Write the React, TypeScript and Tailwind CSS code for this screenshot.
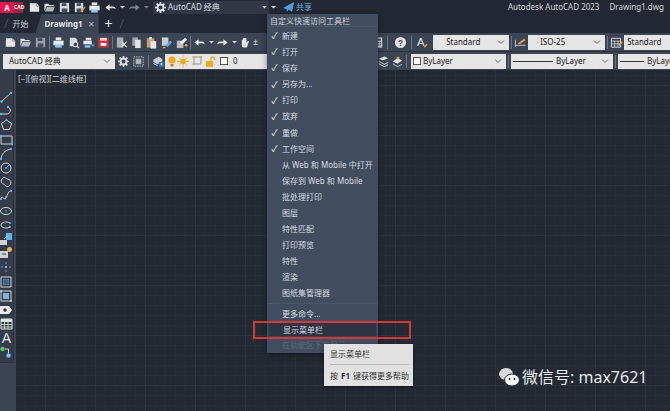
import React from "react";

const font = { fontFamily: '"Noto Sans","Noto Sans CJK SC",sans-serif' };

type P = { c?: string };
const S = ({ children, w = 13 }: { children: React.ReactNode; w?: number }) => (
  <svg width={w} height={13} viewBox="0 0 14 14" className="shrink-0">
    {children}
  </svg>
);
const IFile = ({ c = "#e4e6ea" }: P) => <S><path d="M2 2.500h7l3 3v6H2z" fill={c} /><path d="M9 2.500v3h3" fill="none" stroke="#6b7480" strokeWidth=".8" /></S>;
const IFolder = ({ c = "#dfe2e6" }: P) => <S><path d="M1.500 3h4l1 1.200h5v1.300H4L1.500 11z" fill={c} /><path d="M4.200 6.300h8.600l-2 5H2z" fill={c} opacity=".75" /></S>;
const ISave = ({ c = "#d5d8dd" }: P) => <S><path d="M2 2h10v10H2z" fill={c} /><path d="M4 2.500h5v3H4zM4 8h6v4H4z" fill="#414a59" /></S>;
const ISaveAs = () => <S><path d="M2 2h9v10H2z" fill="#d5d8dd" /><path d="M4 2.500h4.500v3H4zM4 8h5v4H4z" fill="#414a59" /><path d="M8 11l4.500-5 1 1-4.500 5z" fill="#e6a33c" /></S>;
const IPrint = ({ c = "#e8eaee" }: P) => <S><path d="M4 1.500h6v3H4z" fill={c} /><path d="M1.500 5h11v5h-11z" fill={c} /><path d="M3.500 9h7v3.500h-7z" fill="#8ec8ee" /></S>;
const IPreview = () => <S><path d="M3 2h6l2 2v7H3z" fill="#d9dce0" /><circle cx="9" cy="9" r="2.600" fill="#414a59" stroke="#e8eaee" strokeWidth="1.100" /><path d="M11 11l2 2" stroke="#e8eaee" strokeWidth="1.300" /></S>;
const IPlot = () => <S><path d="M4 2h6v2.500H4zM1.500 5h9v4h-9z" fill="#e8eaee" /><path d="M3 10h6v2.500H3z" fill="#8ec8ee" /><path d="M9 9h5l-2 2.500z" fill="#5aa9e6" /></S>;
const IPdf = () => <S><path d="M1.500 2h11v10.500h-11z" fill="#d2323c" /><path d="M3.500 2h7v3h-7z" fill="#f1d6d8" /><path d="M4 7.500h6v3h-6z" fill="#fff" /></S>;
const ICut = () => <S><path d="M2 1.500h7v11H2z" fill="#a9aeb6" /><path d="M7 6l5.500 6M12.500 6L7 12" stroke="#f1f2f4" strokeWidth="1.200" /></S>;
const ICopy = () => <S><path d="M2.500 1.500h6v9h-6z" fill="#9ea4ad" /><path d="M5.500 4h6v9h-6z" fill="#e4e6ea" /></S>;
const IPaste = () => <S><path d="M2 2.500h8v10H2z" fill="#c9a06a" /><path d="M4.500 1h3v2.500h-3z" fill="#e8eaee" /><path d="M6 5.500h6v8H6z" fill="#e8eaee" /></S>;
const IMatch = () => <S><path d="M2 1.500h7v9H2z" fill="#c9ccd1" /><path d="M6 10l5-5 2 2-5 5z" fill="#5aa9e6" /><path d="M3 12.500h3" stroke="#e6a33c" strokeWidth="1.500" /></S>;
const IMatch2 = () => <S><path d="M2 5h7v8H2z" fill="#b9bdc4" /><path d="M5 7l6-5 2 2-5 5z" fill="#e8eaee" /><circle cx="12" cy="10" r="1.500" fill="#e6a33c" /></S>;
const IUndo = ({ c = "#e4e6ea" }: P) => <S><path d="M1.500 7L6 3.500V6h3.500c2 0 3 1.200 3 3-.8-1-1.800-1.300-3-1.300H6v2.800z" fill={c} /></S>;
const IRedo = ({ c = "#e4e6ea" }: P) => <S><path d="M12.500 7L8 3.500V6H4.500c-2 0-3 1.200-3 3 .8-1 1.800-1.300 3-1.300H8v2.800z" fill={c} /></S>;
const ICaret = ({ c = "#d7dade" }: P) => <svg width="7" height="14" viewBox="0 0 7 14" className="shrink-0"><path d="M1 6h5L3.500 8.500z" fill={c} /></svg>;
const IHand = () => <S><path d="M3 7V4.500c0-1 1.200-1 1.200 0V3c0-1 1.300-1 1.300 0v-.5c0-1 1.300-1 1.300 0V3c0-1 1.200-1 1.200 0v4l1.500-1.500c.8-.5 1.500.3 1 1L8.500 12.500H5C3.500 12.500 3 11 3 9.500z" fill="#e4e6ea" /></S>;
const IGear = ({ c = "#dcdfe3" }: P) => <S><circle cx="7" cy="7" r="3.200" fill="none" stroke={c} strokeWidth="2" /><path d="M7 1v2.500M7 10.500V13M1 7h2.500M10.500 7H13M2.800 2.800l1.700 1.700M9.500 9.500l1.700 1.700M11.200 2.800L9.500 4.500M4.500 9.500l-1.700 1.700" stroke={c} strokeWidth="1.800" /></S>;
const IMax = () => <S><path d="M2 2h10v10H2z" fill="none" stroke="#c9ccd1" strokeWidth="1" strokeDasharray="1.500 1" /><path d="M4 4h6v6H4z" fill="#aeb3ba" /></S>;
const ILayer = () => <S><path d="M1.500 5L7 2l4 2v3l-5 3-4.500-2.500z" fill="#c9ccd1" /><path d="M1.500 9l4.500 2.500" stroke="#e8eaee" /><path d="M7.500 7.500h5.500v5.500H7.500z" fill="#2f6fb0" /><path d="M10.200 8.500v2.500" stroke="#fff" strokeWidth="1.500" /></S>;
const ICalc = () => <S><path d="M3 1.500h8v11H3z" fill="#d5d8dd" /><path d="M4.500 3h5v2h-5zM4.500 6.500h1.300v1.300H4.500zM6.500 6.500h1.300v1.300H6.500zM8.500 6.500h1.300v1.300H8.500zM4.500 9h1.300v1.300H4.500zM6.500 9h1.300v1.300H6.500zM8.500 9h1.300v1.300H8.500z" fill="#414a59" /></S>;
const IHelp = () => <S><circle cx="7" cy="7" r="6" fill="#e4e6ea" /><text x="7" y="10.300" textAnchor="middle" fontSize="9" fontWeight="700" fill="#414a59" fontFamily="Liberation Sans">?</text></S>;
const IStyleA = () => <S><text x="1" y="11" fontSize="12" fill="#e8eaee" fontFamily="Liberation Sans">A</text><path d="M9 12l3-3" stroke="#e6a33c" strokeWidth="1.500" /></S>;
const IDim = () => <S><path d="M1.500 4v8M1.500 10h11" stroke="#c9ccd1" /><path d="M4 8l7-5 1.500 1.500L6 9z" fill="#e6a33c" /></S>;
const ITable = () => <S><path d="M1.500 2.500h10v9.500h-10z" fill="none" stroke="#dfe2e6" /><path d="M1.500 5.500h10M1.500 8.500h10M5 5.500V12M8.500 5.500V12" stroke="#dfe2e6" strokeWidth=".8" /><path d="M9 9l4-3 .8 1-4 4z" fill="#e6a33c" /></S>;
const ILayMatch = () => <S><path d="M2 4l6-2.500 4 2-6 2.500z" fill="#dfe2e6" /><path d="M2 7l6 3 4-2M2 9.500l6 3 4-2" fill="none" stroke="#dfe2e6" /></S>;
const ILayPrev = () => <S><path d="M2 7l5-3.500 5 2.500-5 3.500z" fill="#dfe2e6" /><path d="M2 9.500l5 3 5-2.500" fill="none" stroke="#c9ccd1" /><path d="M6 2l3 0v2.500H6z" fill="#e6a33c" /></S>;
const Sep = ({ l = 3, r = 3 }: { l?: number; r?: number }) => (
  <div className="w-px h-[13px] bg-[#6a7483] shrink-0" style={{ marginLeft: l, marginRight: r }} />
);
const Chevron = () => (
  <svg width="8" height="6" viewBox="0 0 8 6" className="shrink-0"><path d="M1 1.500l3 3 3-3" fill="none" stroke="#6e6e6e" strokeWidth="1" /></svg>
);
const Slot = ({ children, w = 15 }: { children: React.ReactNode; w?: number }) => (
  <div className="flex items-center justify-center shrink-0" style={{ width: w }}>{children}</div>
);
const Drop = ({ w, children }: { w: number; children: React.ReactNode }) => (
  <div className="h-[15px] bg-[#e6e6e6] flex items-center justify-between pr-[4px] shrink-0 text-[#222] text-[8px]" style={{ width: w }}>
    {children}
    <Chevron />
  </div>
);

const items: [string, boolean][] = [
  ["新建", true], ["打开", true], ["保存", true], ["另存为...", true], ["打印", true], ["放弃", true], ["重做", true], ["工作空间", true],
  ["从 Web 和 Mobile 中打开", false], ["保存到 Web 和 Mobile", false], ["批处理打印", false], ["图层", false], ["特性匹配", false],
  ["打印预览", false], ["特性", false], ["渲染", false], ["图纸集管理器", false],
];

const dot = "#5fb4ec";
const Side = ({ children }: { children: React.ReactNode }) => (
  <svg width="13" height="14" viewBox="0 0 13 14" className="shrink-0">{children}</svg>
);
const line = { fill: "none", stroke: "#cfd3d8", strokeWidth: 1 };
const sideIcons = [
  <Side><path d="M1 12L12 2" {...line} /><circle cx="1.500" cy="11.500" r="1.300" fill={dot} /><circle cx="11" cy="3" r="1.300" fill={dot} /></Side>,
  <Side><path d="M0 10h6c5 0 6-5 2-7" {...line} /><circle cx="1" cy="10" r="1.200" fill={dot} /><circle cx="8" cy="3" r="1.200" fill={dot} /></Side>,
  <Side><path d="M6.500 2l5 3.500-2 6h-6l-2-6z" {...line} /><circle cx="6.500" cy="2" r="1" fill={dot} /></Side>,
  <Side><path d="M1 3h11v8H1z" {...line} /><circle cx="1" cy="3" r="1.200" fill={dot} /><circle cx="12" cy="11" r="1.200" fill={dot} /></Side>,
  <Side><path d="M1 13C1 7 5 3 11 2" {...line} /><circle cx="1" cy="12" r="1.100" fill={dot} /><circle cx="11" cy="2" r="1.100" fill={dot} /></Side>,
  <Side><circle cx="6" cy="7" r="5" {...line} /><path d="M6 7l3.500-3.500" stroke={dot} /><circle cx="6" cy="7" r="1" fill={dot} /></Side>,
  <Side><path d="M2 4c2-3 4-1 5 0 3 0 5 3 3 6-2 3-5 1-6-1-2 0-4-2-2-5z" {...line} /></Side>,
  <Side><path d="M0 11c3-7 4 2 6-2s2-7 6-7" {...line} /><circle cx="1" cy="10" r="1" fill={dot} /><circle cx="6" cy="8" r="1" fill={dot} /><circle cx="11" cy="2" r="1" fill={dot} /></Side>,
  <Side><ellipse cx="6" cy="7" rx="5.500" ry="3.500" {...line} /><circle cx="6" cy="7" r=".8" fill={dot} /></Side>,
  <Side><path d="M10 9C7 11 1 10 1 7s6-4 9-2" {...line} /><circle cx="10" cy="5" r="1" fill={dot} /><circle cx="10" cy="9" r="1" fill={dot} /></Side>,
  <Side><path d="M6 1h6v7H6z" fill={dot} /><path d="M0 8h7v5H0z" fill="#cfd3d8" /><path d="M7 4l-3 3" stroke="#fff" /></Side>,
  <Side><path d="M0 5h8v7H0z" fill="#cfd3d8" /><path d="M2 8h4" stroke="#414a59" /><circle cx="9.500" cy="3.500" r="2.500" fill="#e6b33c" /></Side>,
  <Side><circle cx="6" cy="7" r="1" fill="#cfd3d8" /><circle cx="2" cy="7" r=".8" fill={dot} /><circle cx="10" cy="7" r=".8" fill={dot} /><circle cx="6" cy="3" r=".8" fill={dot} /><circle cx="6" cy="11" r=".8" fill={dot} /></Side>,
  <Side><path d="M1 2h10v10H1z" {...line} /><path d="M3 4h6v6H3z" fill="#5e8fc0" /><path d="M3 6h6M3 8h6M5 4v6M7 4v6" stroke="#2d3644" strokeWidth=".6" /></Side>,
  <Side><path d="M1 2h10v10H1z" {...line} /><path d="M3 4h6v6H3z" fill="#7fb2dc" /><circle cx="1" cy="2" r="1" fill="#cfd3d8" /><circle cx="11" cy="12" r="1" fill="#cfd3d8" /></Side>,
  <Side><path d="M0 3h9l3 4-3 4H0z" fill="#e8eaee" /><circle cx="5" cy="7" r="1.800" fill="#343c49" /></Side>,
  <Side><path d="M1 2h11v10H1z" fill="none" stroke="#dfe2e6" /><path d="M1 2h11v3H1z" fill="#dfe2e6" /><path d="M1 7.500h11M1 10h11M4.500 5v7M8 5v7" stroke="#dfe2e6" strokeWidth=".8" /></Side>,
  <span className="text-[#e8eaee] text-[14px] leading-[14px] w-[13px] text-center" style={{ fontFamily: "Liberation Sans" }}>A</span>,
  <Side><circle cx="2.500" cy="4" r="2.300" fill="#4cc76a" /><circle cx="8.500" cy="10.500" r="2.300" fill="#6cc1f5" /><path d="M5 4h3.500v4" fill="none" stroke="#cfd3d8" /></Side>,
];

export default function App() {
  return (
    <div className="relative w-[670px] h-[411px] overflow-hidden flex flex-col bg-[#222933] text-[#d8dce2]" style={font}>
      {/* title bar */}
      <div className="h-[14px] flex items-center bg-[#222833] shrink-0">
        <div className="flex h-[11px] w-[23px] items-stretch shrink-0 text-[5px] font-bold leading-[11px]">
          <div className="w-[14px] bg-[#e5144f] text-white text-[8px] text-center">A</div>
          <div className="w-[9px] bg-[#a81f3f] text-white text-center">CAD</div>
        </div>
        <div className="flex items-center ml-[4px]">
          <Slot><IFile /></Slot><Slot><IFolder /></Slot><Slot><ISave /></Slot><Slot><ISaveAs /></Slot><Slot><IPrint /></Slot>
          <Slot w={17}><IUndo /></Slot><Slot w={6}><ICaret /></Slot>
          <Slot w={18}><IRedo c="#7b828c" /></Slot><Slot w={7}><ICaret c="#7b828c" /></Slot>
        </div>
        <div className="ml-[3px] w-[116px] h-[13px] bg-[#303845] flex items-center pl-[1px] pr-[1px] text-[8px] shrink-0">
          <IGear />
          <span className="ml-[1px] text-[#d7dbe1] whitespace-nowrap">AutoCAD 经典</span>
          <div className="ml-auto"><ICaret /></div>
        </div>
        <Slot w={8}><ICaret /></Slot>
        <div className="ml-[6px]">
          <svg width="11" height="11" viewBox="0 0 11 11"><path d="M0 6L11 0 9 10 5.500 7.500 4 10 3.500 7z" fill="#4aa0e0" /></svg>
        </div>
        <span className="ml-[2px] text-[8px] text-[#6fb0e4]">共享</span>
        <span className="ml-auto text-[8px] whitespace-nowrap text-[#d2d6dc]">Autodesk AutoCAD 2023</span>
        <span className="ml-[10px] mr-[6px] text-[8px] whitespace-nowrap text-[#d2d6dc]">Drawing1.dwg</span>
      </div>

      {/* tabs */}
      <div className="h-[19px] flex items-center bg-[#222833] shrink-0 text-[8px]">
        <span className="ml-[4px] text-[#5a6472] text-[13px] font-light">/</span>
        <span className="ml-[4px] text-[#c6cbd2]">开始</span>
        <div className="ml-[7px] h-[19px] w-[63px] bg-[#3b4453] flex items-center pl-[9px] shrink-0 [clip-path:polygon(6px_0,100%_0,100%_100%,0_100%)]">
          <span className="font-bold text-[#e6e8ec]">Drawing1</span>
          <span className="ml-[5px] text-[#b8bdc5] text-[8px]">✕</span>
        </div>
        <span className="ml-[6px] text-[#e8eaee] text-[14px] leading-none">+</span>
        <span className="ml-[7px] text-[#5a6472] text-[13px] font-light">/</span>
      </div>

      {/* toolbar 1 */}
      <div className="h-[19px] flex items-center bg-[#3b4453] border-b border-[#2d3441] shrink-0 pl-[3px] text-[8px]">
        <Slot><IFile /></Slot><Slot><IFolder /></Slot><Slot><ISave c="#9aa0a9" /></Slot>
        <Sep l={1} r={1} />
        <Slot><IPrint /></Slot><Slot><IPreview /></Slot><Slot><IPlot /></Slot><Slot><IPdf /></Slot>
        <Sep l={1} r={1} />
        <Slot><ICut /></Slot><Slot><ICopy /></Slot><Slot><IPaste /></Slot><Slot><IMatch /></Slot><Slot><IMatch2 /></Slot>
        <Sep l={1} r={1} />
        <Slot><IUndo /></Slot><Slot w={8}><ICaret /></Slot><Slot><IRedo /></Slot><Slot w={8}><ICaret /></Slot>
        <Slot w={15}><IHand /></Slot>
        <span className="text-[#dfe2e6] text-[9px] w-[12px]">±</span>
        <div className="w-[113px] shrink-0" />
        <Slot><ICalc /></Slot>
        <Sep l={1} r={1} />
        <div className="ml-[5px]"><IHelp /></div>
        <Sep l={4} r={3} />
        <Slot w={14}><IStyleA /></Slot>
        <div className="ml-[4px]"><Drop w={76}><span className="ml-[13px]">Standard</span></Drop></div>
        <Sep l={2} r={1} />
        <Slot w={14}><IDim /></Slot>
        <div className="ml-[1px]"><Drop w={77}><span className="ml-[12px]">ISO-25</span></Drop></div>
        <Sep l={2} r={1} />
        <Slot w={14}><ITable /></Slot>
        <div className="ml-[1px]"><Drop w={60}><span className="ml-[3px]">Standard</span></Drop></div>
      </div>

      {/* toolbar 2 */}
      <div className="h-[18px] flex items-center bg-[#3b4453] shrink-0 pl-[3px] text-[8px]">
        <Drop w={112}><span className="ml-[6px]">AutoCAD 经典</span></Drop>
        <Slot w={16}><IGear /></Slot>
        <Slot w={14}><IMax /></Slot>
        <Sep l={3} r={2} />
        <Slot w={14}><ILayer /></Slot>
        <div className="w-[120px] h-[15px] bg-[#e6e6e6] flex items-center pl-[1px] text-[#222] shrink-0">
          <svg width="54" height="13" viewBox="0 0 54 13" className="shrink-0">
            <circle cx="6" cy="5" r="3.600" fill="#f2ab14" /><path d="M4.500 9h3v2.500h-3z" fill="#b8801c" />
            <circle cx="17" cy="6.500" r="2.800" fill="#f2ab14" /><path d="M17 0v13M11 6.500h12M13 2.500l8 8M21 2.500l-8 8" stroke="#f2ab14" strokeWidth=".8" />
            <path d="M28 2h7v7h-7z" fill="none" stroke="#8a97a6" /><path d="M26.500 1h2v2h-2zM34 1h2v2h-2zM26.500 8h2v2h-2z" fill="#e6a33c" />
            <path d="M40 6h7v6h-7z" fill="#f2ab14" /><path d="M45 6V3.500c0-2 3.500-2 3.500 0V5" fill="none" stroke="#f2ab14" strokeWidth="1.300" />
          </svg>
          <div className="w-[8px] h-[8px] bg-white border border-[#555] shrink-0" />
          <span className="ml-[5px]">0</span>
        </div>
        <div className="ml-[92px] flex items-center shrink-0">
          <Slot w={13}><ILayMatch /></Slot><Slot w={14}><ILayPrev /></Slot>
          <Sep l={2} r={4} />
          <Drop w={95}><span className="flex items-center ml-[2px]"><span className="w-[8px] h-[8px] bg-white border border-[#555] mr-[2px]" />ByLayer</span></Drop>
          <Sep l={2} r={2} />
          <Drop w={102}><span className="flex items-center ml-[2px]"><span className="w-[40px] h-px bg-[#333] mr-[3px]" />ByLayer</span></Drop>
          <Sep l={2} r={2} />
          <div className="h-[15px] w-[60px] bg-[#e6e6e6] flex items-center text-[#222] shrink-0 overflow-hidden whitespace-nowrap">
            <span className="w-[24px] h-px bg-[#333] ml-[2px] mr-[3px] shrink-0" />ByLayer
          </div>
        </div>
      </div>

      {/* work area */}
      <div className="flex flex-1 min-h-0">
        <div className="w-[16px] bg-[#3b4453] shrink-0 flex flex-col">
          <div className="w-[14px] bg-[#343c49] border-r border-b border-[#2b323e] pt-[20px] pb-[2px] flex flex-col gap-0">
            {sideIcons.map((ic, i) => (
              <div key={i} className="h-[14.200px] flex items-center justify-center">{ic}</div>
            ))}
          </div>
        </div>
        <div className="flex-1 relative bg-[#222933] bg-[linear-gradient(#2b333e_1px,transparent_1px),linear-gradient(90deg,#2b333e_1px,transparent_1px),linear-gradient(#262d38_1px,transparent_1px),linear-gradient(90deg,#262d38_1px,transparent_1px)] bg-[size:50px_50px,50px_50px,10px_10px,10px_10px] bg-[position:29px_15px,29px_15px,9px_5px,9px_5px]">
          <div className="pl-[2px] pt-[3px] text-[8px] leading-[12px] text-[#cdd1d7]">[−][俯视][二维线框]</div>
          <div className="absolute left-[484px] top-[295px] flex items-center text-[16px] text-[#e9ebee] whitespace-nowrap">
            <svg width="21" height="22" viewBox="0 0 21 22" className="shrink-0 -ml-[1px] mr-[1px]">
              <ellipse cx="7" cy="8" rx="7" ry="6" fill="#d8dadd" />
              <ellipse cx="13" cy="14" rx="7.500" ry="6" fill="#f2f3f4" stroke="#222933" />
              <circle cx="10.500" cy="13" r="1" fill="#222933" /><circle cx="15.500" cy="13" r="1" fill="#222933" />
            </svg>
            <span className="ml-[1px]">微信号: max7621</span>
          </div>
        </div>
      </div>

      {/* dropdown menu */}
      <div className="absolute left-[267px] top-[14px] w-[111px] h-[339px] bg-[#414c5e] shadow-[0_2px_6px_rgba(0,0,0,.45)] text-[8px] text-[#d8dce2] flex flex-col">
        <div className="h-[13px] leading-[13px] pl-[3px] text-[#d2d6dc] border-b border-[#4c5769] whitespace-nowrap">自定义快速访问工具栏</div>
        <div className="h-[1px]" />
        {items.map(([t, ck], i) => (
          <div key={i} className="h-[16.200px] flex items-center whitespace-nowrap">
            <span className="w-[15px] text-center text-[9px] text-[#eef0f3] shrink-0">{ck ? "✓" : ""}</span>
            <span>{t}</span>
          </div>
        ))}
        <div className="h-px bg-[#4c5769] mt-[2px] mb-[2px]" />
        <div className="h-[16px] flex items-center pl-[15px]">更多命令...</div>
        <div className="h-[15px] flex items-center pl-[14px] mx-[1px] bg-[#2e3542] border border-[#3a4352]">显示菜单栏</div>
        <div className="h-[16px] flex items-center pl-[15px] text-[#5f6a7b] whitespace-nowrap">在功能区下方显示</div>
      </div>

      {/* red highlight */}
      <div className="absolute left-[253px] top-[321px] w-[158px] h-[18px] border-2 border-[#d8363a]" />

      {/* tooltip */}
      <div className="absolute left-[324px] top-[344px] w-[89px] h-[42px] bg-[#e1e1e1] shadow-[0_1px_3px_rgba(0,0,0,.5)] text-[8px] text-[#333] flex flex-col pl-[6px] pr-[4px]">
        <div className="h-[20px] flex items-center">显示菜单栏</div>
        <div className="h-px bg-[#b9b9b9]" />
        <div className="flex-1 flex items-center whitespace-nowrap">按<b className="mx-[3px]">F1</b>键获得更多帮助</div>
      </div>
    </div>
  );
}
